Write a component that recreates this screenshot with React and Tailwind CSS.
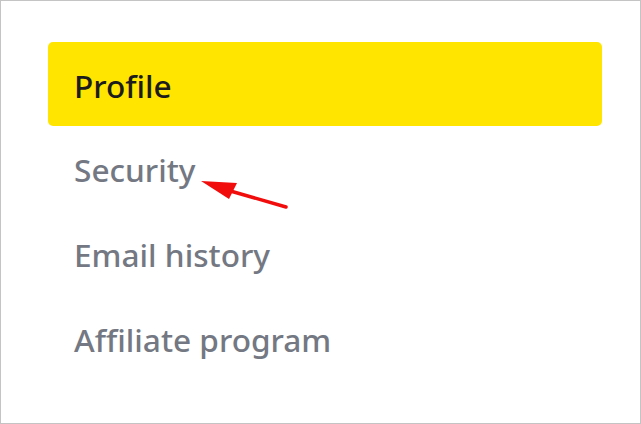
export default function App() {
  const items = ["Security", "Email history", "Affiliate program"];

  return (
    <div className="relative w-[641px] h-[424px] bg-white border border-[#c4c4c4] pt-[41px] pl-[47px] font-['Noto_Sans',sans-serif]">
      <nav className="flex flex-col w-[554px]">
        <div className="h-[84px] flex items-center pl-[26px] pt-[3px] bg-[#ffe500] rounded-[5px] text-[31.6px] font-medium text-[#1c1c1c]">
          Profile
        </div>
        {items.map((item) => (
          <div
            key={item}
            className="h-[85px] flex items-center pl-[26px] pt-[3px] text-[31.6px] font-medium text-[#737882]"
          >
            {item}
          </div>
        ))}
      </nav>

      {/* annotation arrow */}
      <svg
        className="absolute left-[195px] top-[170px]"
        width="100"
        height="45"
        viewBox="0 0 100 45"
      >
        <line x1="90" y1="36" x2="24" y2="17" stroke="#f20d0d" strokeWidth="3.5" strokeLinecap="round" />
        <polygon points="5,10 41,12 33,28" fill="#f20d0d" />
      </svg>
    </div>
  );
}
